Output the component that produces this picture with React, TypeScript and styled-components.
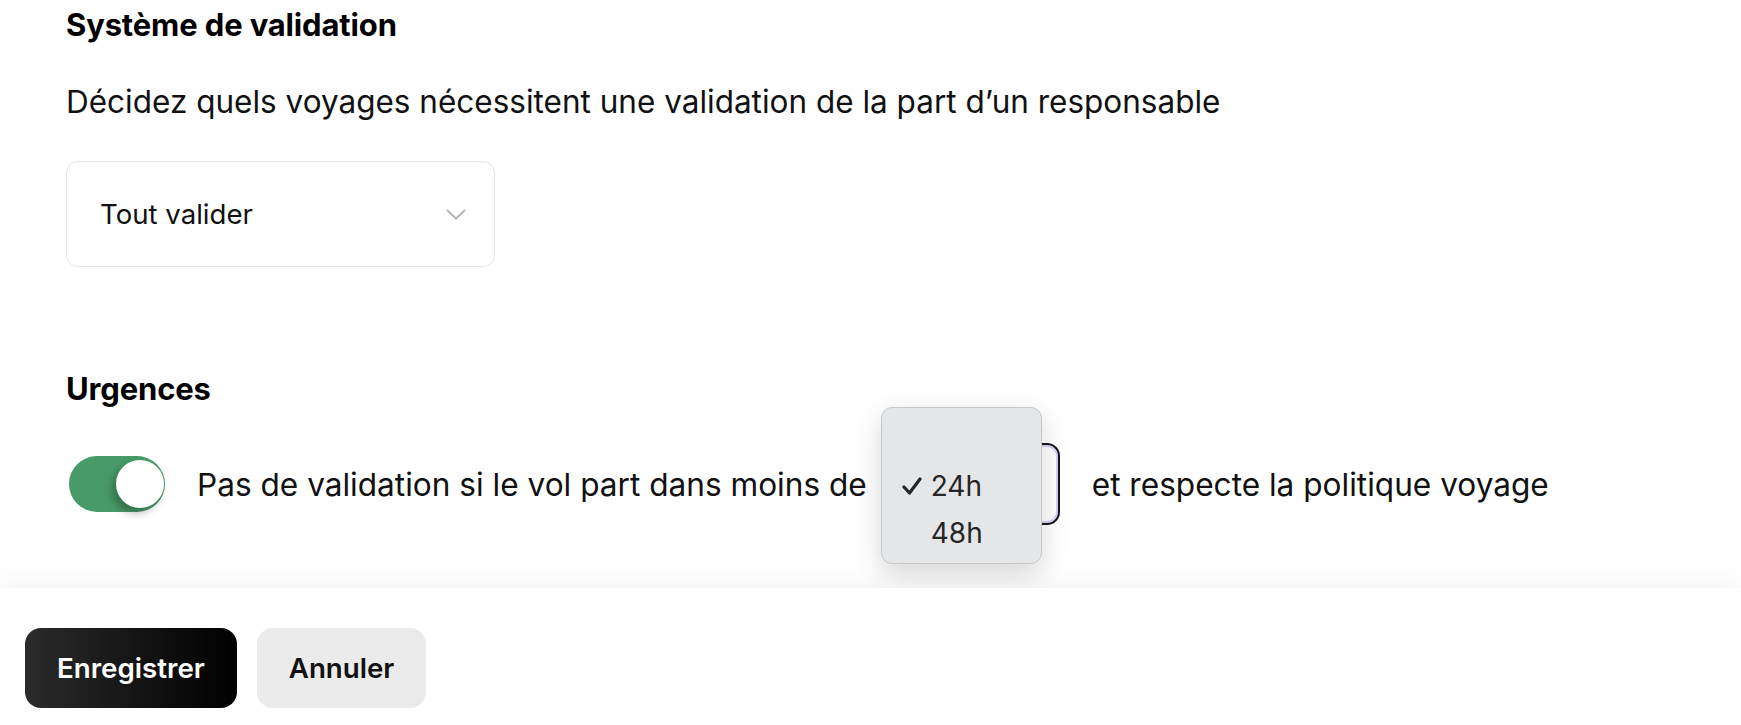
import * as React from 'react'
import styled, { createGlobalStyle } from 'styled-components'

const GlobalStyle = createGlobalStyle`
  html, body {
    margin: 0;
    padding: 0;
    background: #fff;
  }

  body {
    font-family: Inter, "Noto Sans", sans-serif;
    color: #111;
    -webkit-font-smoothing: antialiased;
  }
`

const Page = styled.div`
  display: flex;
  flex-direction: column;
  height: 100vh;
  overflow: hidden;
`

const Main = styled.main`
  flex: 1;
  padding: 5px 66px 0;
`

const Section = styled.section<{ $spaced?: boolean }>`
  margin-top: ${props => (props.$spaced ? '102px' : '0')};
`

const Heading = styled.h2`
  margin: 0;
  font-size: 31px;
  line-height: 40px;
  font-weight: 700;
  letter-spacing: -0.15px;
  color: #000;
`

const Description = styled.p`
  margin: 37px 0 0;
  font-size: 31.5px;
  line-height: 40px;
  color: #111;
`

const Select = styled.div`
  margin-top: 39px;
  width: 429px;
  height: 106px;
  box-sizing: border-box;
  border: 1.5px solid #e4e4e6;
  border-radius: 12px;
  padding: 0 28px 0 33px;
  display: flex;
  align-items: center;
  justify-content: space-between;
  font-size: 27.6px;
  color: #111;
`

const Chevron = styled.svg`
  width: 20px;
  height: 11px;
  flex-shrink: 0;
`

const Row = styled.div`
  margin-top: 34px;
  display: flex;
  align-items: center;
  gap: 32px;
  font-size: 31.6px;
  color: #111;
`

const Toggle = styled.div`
  margin-left: 3px;
  width: 96px;
  height: 56px;
  box-sizing: border-box;
  border-radius: 28px;
  background: #489b68;
  padding: 4px 1px 4px 4px;
  display: flex;
  justify-content: flex-end;
  flex-shrink: 0;
`

const Knob = styled.div`
  width: 48px;
  height: 48px;
  border-radius: 50%;
  background: #fff;
  box-shadow: -4px 5px 9px rgba(0, 0, 0, 0.28);
`

const InlineSelectWrap = styled.div`
  position: relative;
  flex-shrink: 0;
`

const InlineSelect = styled.div`
  width: 161px;
  height: 82px;
  box-sizing: border-box;
  border: 2px solid #161616;
  border-radius: 13px;
  box-shadow: inset 0 0 0 2px #d6d2f6;
  padding: 0 20px 0 30px;
  display: flex;
  align-items: center;
  justify-content: space-between;
  font-size: 28px;
`

const Menu = styled.div`
  position: absolute;
  left: -18px;
  top: -36px;
  width: 161px;
  height: 157px;
  box-sizing: border-box;
  padding: 55px 0 9px;
  background: #e5e6e8;
  border: 1px solid #c9c9cb;
  border-radius: 11px;
  box-shadow: 0 10px 28px rgba(0, 0, 0, 0.16);
`

const MenuItem = styled.div`
  height: 46.5px;
  display: flex;
  align-items: center;
  padding-left: 20px;
  font-size: 28px;
  color: #262626;
`

const CheckSlot = styled.span`
  width: 29px;
  display: flex;
  align-items: center;
`

const Footer = styled.footer`
  height: 137px;
  box-sizing: border-box;
  padding: 40px 25px 0;
  display: flex;
  align-items: flex-start;
  gap: 20px;
  background: #fff;
  box-shadow: 0 -6px 26px rgba(0, 0, 0, 0.045);
  position: relative;
`

const Button = styled.button<{ $primary?: boolean }>`
  height: 80px;
  border: 0;
  border-radius: 16px;
  padding: 0 32px;
  font-family: Inter, "Noto Sans", sans-serif;
  font-size: 27.7px;
  font-weight: 600;
  cursor: pointer;
  color: ${props => (props.$primary ? '#fff' : '#111')};
  background: ${props => (props.$primary ? 'linear-gradient(90deg, #2b2b2b 0%, #000 100%)' : '#ebebeb')};
`

const ChevronIcon = () => (
  <Chevron viewBox="0 0 20 11" fill="none">
    <path d="M1.5 1.5 L10 9.5 L18.5 1.5" stroke="#b7b6be" strokeWidth="2" strokeLinecap="round" strokeLinejoin="round" />
  </Chevron>
)

const Check = () => (
  <svg width="20" height="18" viewBox="0 0 20 18" fill="none">
    <path d="M2 10 L7.5 16 L18 2" stroke="#262626" strokeWidth="3.2" strokeLinecap="round" strokeLinejoin="round" />
  </svg>
)

const hours = ['24h', '48h']

export default function App() {
  const [selected] = React.useState('24h')

  return (
    <>
      <GlobalStyle />
      <Page>
        <Main>
          <Section>
            <Heading>Système de validation</Heading>
            <Description>Décidez quels voyages nécessitent une validation de la part d’un responsable</Description>
            <Select>
              <span>Tout valider</span>
              <ChevronIcon />
            </Select>
          </Section>

          <Section $spaced>
            <Heading>Urgences</Heading>
            <Row>
              <Toggle>
                <Knob />
              </Toggle>
              <span>Pas de validation si le vol part dans moins de</span>
              <InlineSelectWrap>
                <InlineSelect>
                  <span>{selected}</span>
                  <ChevronIcon />
                </InlineSelect>
                <Menu>
                  {hours.map(h => (
                    <MenuItem key={h}>
                      <CheckSlot>{h === selected && <Check />}</CheckSlot>
                      {h}
                    </MenuItem>
                  ))}
                </Menu>
              </InlineSelectWrap>
              <span>et respecte la politique voyage</span>
            </Row>
          </Section>
        </Main>

        <Footer>
          <Button $primary>Enregistrer</Button>
          <Button>Annuler</Button>
        </Footer>
      </Page>
    </>
  )
}
